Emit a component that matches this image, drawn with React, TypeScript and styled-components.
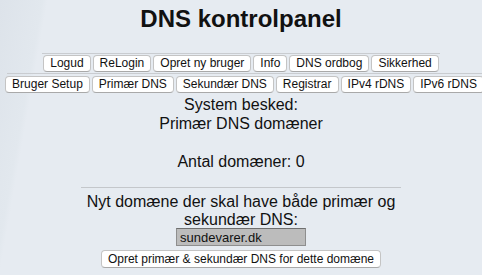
import styled, { createGlobalStyle } from "styled-components";

const GlobalStyle = createGlobalStyle`
    html, body {
        margin: 0;
        padding: 0;
        background: #e3e9ef;
    }
    body {
        font-family: "Liberation Sans", Arial, sans-serif;
        color: #111;
    }
`;

const Page = styled.div`
    min-height: 275px;
    background: linear-gradient(100deg, #dde3ea 0%, #e2e8ee 8%, #e6ebf1 9%, #e6ebf1 100%);
    text-align: center;
    font-size: 16px;
    overflow: hidden;
`;

const Title = styled.h1`
    font-size: 24px;
    font-weight: bold;
    margin: 0;
    padding-top: 5px;
    line-height: 28px;
`;

const Menu = styled.div`
    margin-top: 20px;
    display: flex;
    flex-direction: column;
    align-items: center;
`;

const MenuRow = styled.div<{ $wide?: boolean }>`
    display: flex;
    justify-content: center;
    gap: 2px;
    border-top: 1px solid #c9ccd0;
    padding: 1px 1px 1px 1px;
    ${(p) => p.$wide && "align-self: stretch; margin-left: 7px; padding: 2px 0 1px 0;"}
`;

const Btn = styled.button`
    font-family: "Liberation Sans", Arial, sans-serif;
    font-size: 12px;
    height: 17px;
    line-height: 15px;
    padding: 0 6px;
    background: #fff;
    border: 1px solid #c4c4c4;
    border-bottom-color: #a9a9a9;
    border-radius: 4px;
    color: #111;
    white-space: nowrap;
    cursor: pointer;
`;

const Message = styled.div`
    line-height: 19px;
    margin-top: 1px;
`;

const Rule = styled.hr`
    width: 320px;
    margin: 16px auto 5px;
    border: none;
    border-top: 1px solid #c4c7cb;
`;

const DomainForm = styled.form`
    display: flex;
    flex-direction: column;
    align-items: center;
`;

const Label = styled.div`
    width: 340px;
    line-height: 18px;
`;

const DomainInput = styled.input`
    width: 130px;
    height: 18px;
    box-sizing: border-box;
    margin-top: -1px;
    padding: 0 3px;
    font-family: "Liberation Sans", Arial, sans-serif;
    font-size: 13px;
    background: #bcbcbc;
    border: 1px solid #8e8e8e;
    border-top-color: #6f6f6f;
    color: #111;
`;

const SubmitBtn = styled(Btn)`
    margin-top: 4px;
    height: 18px;
`;

const row1 = ["Logud", "ReLogin", "Opret ny bruger", "Info", "DNS ordbog", "Sikkerhed"];
const row2 = ["Bruger Setup", "Primær DNS", "Sekundær DNS", "Registrar", "IPv4 rDNS", "IPv6 rDNS"];

function App() {
    return (
        <Page>
            <GlobalStyle />
            <Title>DNS kontrolpanel</Title>
            <Menu>
                <MenuRow>
                    {row1.map((b) => <Btn key={b}>{b}</Btn>)}
                </MenuRow>
                <MenuRow $wide>
                    {row2.map((b) => <Btn key={b}>{b}</Btn>)}
                </MenuRow>
            </Menu>
            <Message>
                System besked:<br />
                Primær DNS domæner<br />
                <br />
                Antal domæner: 0
            </Message>
            <Rule />
            <DomainForm onSubmit={(e) => e.preventDefault()}>
                <Label>Nyt domæne der skal have både primær og sekundær DNS:</Label>
                <DomainInput defaultValue="sundevarer.dk" />
                <SubmitBtn type="submit">Opret primær &amp; sekundær DNS for dette domæne</SubmitBtn>
            </DomainForm>
        </Page>
    );
}

export default App;
